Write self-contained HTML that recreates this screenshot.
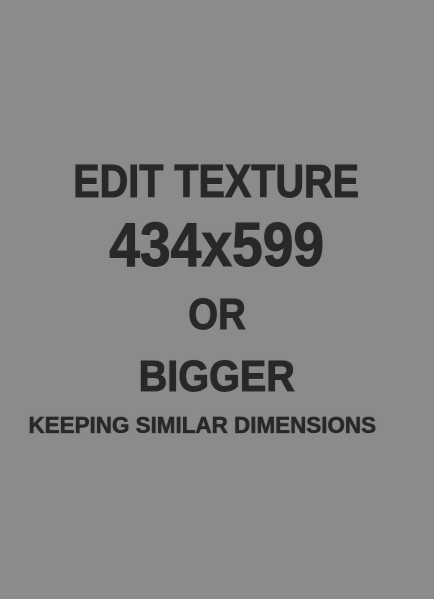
<!DOCTYPE html>
<html><head><style>
html,body{margin:0;padding:0;}
body{width:434px;height:599px;background:#8b8b8b;position:relative;overflow:hidden;font-family:"Liberation Sans",sans-serif;font-weight:bold;color:#282828;}
.l{position:absolute;left:0;width:434px;text-align:center;line-height:1;white-space:nowrap;}
.l span{display:inline-block;-webkit-text-stroke:1px #282828;text-shadow:0 1px 1px rgba(200,200,200,.35),0 0 2px rgba(0,0,0,.3);}
</style></head><body>
<div class="l" style="top:158px;left:-1px;font-size:46px"><span style="transform:scaleX(.86)">EDIT TEXTURE</span></div>
<div class="l" style="top:215px;font-size:62px"><span style="transform:scaleX(.89)">434x599</span></div>
<div class="l" style="top:293px;font-size:44px"><span style="transform:scaleX(.87)">OR</span></div>
<div class="l" style="top:355px;font-size:44px"><span style="transform:scaleX(.9)">BIGGER</span></div>
<div class="l" style="top:414px;left:-15px;font-size:23px"><span style="transform:scaleX(.975);-webkit-text-stroke:.5px #282828">KEEPING SIMILAR DIMENSIONS</span></div>
</body></html>
